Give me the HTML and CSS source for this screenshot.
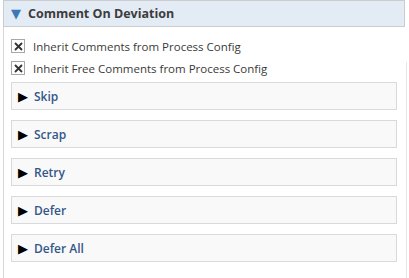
FILE: index.html
```html
<!DOCTYPE html>
<html lang="en">
<head>
  <meta charset="UTF-8">
  <title>Comment On Deviation</title>
  <link rel="stylesheet" href="styles.css">
</head>
<body>
  <div class="panel">
    <div class="panel-header">
      <span class="caret-down">&#9660;</span>
      <span class="panel-title">Comment On Deviation</span>
    </div>

    <div class="panel-body">
      <label class="check-row">
        <span class="check-box">
          <svg width="9" height="9" viewBox="0 0 9 9"><path d="M1 1L8 8M8 1L1 8" stroke="#333" stroke-width="1.8"/></svg>
        </span>
        Inherit Comments from Process Config
      </label>
      <label class="check-row">
        <span class="check-box">
          <svg width="9" height="9" viewBox="0 0 9 9"><path d="M1 1L8 8M8 1L1 8" stroke="#333" stroke-width="1.8"/></svg>
        </span>
        Inherit Free Comments from Process Config
      </label>

      <div class="section-list">
        <div class="section"><span class="caret-right">&#9654;</span>Skip</div>
        <div class="section"><span class="caret-right">&#9654;</span>Scrap</div>
        <div class="section"><span class="caret-right">&#9654;</span>Retry</div>
        <div class="section"><span class="caret-right">&#9654;</span>Defer</div>
        <div class="section"><span class="caret-right">&#9654;</span>Defer All</div>
      </div>
    </div>
  </div>
</body>
</html>
```

FILE: styles.css
```css
body {
  margin: 0;
  font-family: 'Open Sans', sans-serif;
  background: #fff;
  color: #333;
}

.panel {
  margin-left: 3px;
  width: 402px;
}

.panel-header {
  height: 25px;
  background: #e3ebf4;
  border: 1px solid #cccccc;
  display: flex;
  align-items: center;
  padding-left: 7px;
}

.caret-down {
  font-family: 'DejaVu Sans', sans-serif;
  color: #3a78b8;
  font-size: 13px;
  width: 17px;
}

.panel-title {
  font-weight: bold;
  font-size: 12.5px;
  color: #3c3c3c;
}

.panel-body {
  position: relative;
  border-left: 1px solid #d6d6d6;
  padding: 8px 0 0 7px;
  height: 243px;
}

.panel-body::after {
  content: "";
  position: absolute;
  top: 35px;
  bottom: 0;
  right: -2px;
  border-right: 1px solid #e6e6e6;
}

.check-row {
  display: flex;
  align-items: center;
  height: 22px;
  font-size: 11.5px;
  color: #3a3a3a;
}

.check-box {
  width: 12px;
  height: 12px;
  border: 1px solid #a8a8a8;
  margin-right: 8px;
  display: flex;
  align-items: center;
  justify-content: center;
}

.section-list {
  margin-top: 3px;
  display: flex;
  flex-direction: column;
  gap: 10px;
}

.section {
  width: 384px;
  height: 26px;
  background: #f9f9f9;
  border: 1px solid #d9d9d9;
  display: flex;
  align-items: center;
  font-size: 12px;
  font-weight: 600;
  color: #34578a;
}

.caret-right {
  font-family: 'DejaVu Sans', sans-serif;
  color: #000;
  font-size: 13px;
  margin: 0 6px 0 6px;
}
```
